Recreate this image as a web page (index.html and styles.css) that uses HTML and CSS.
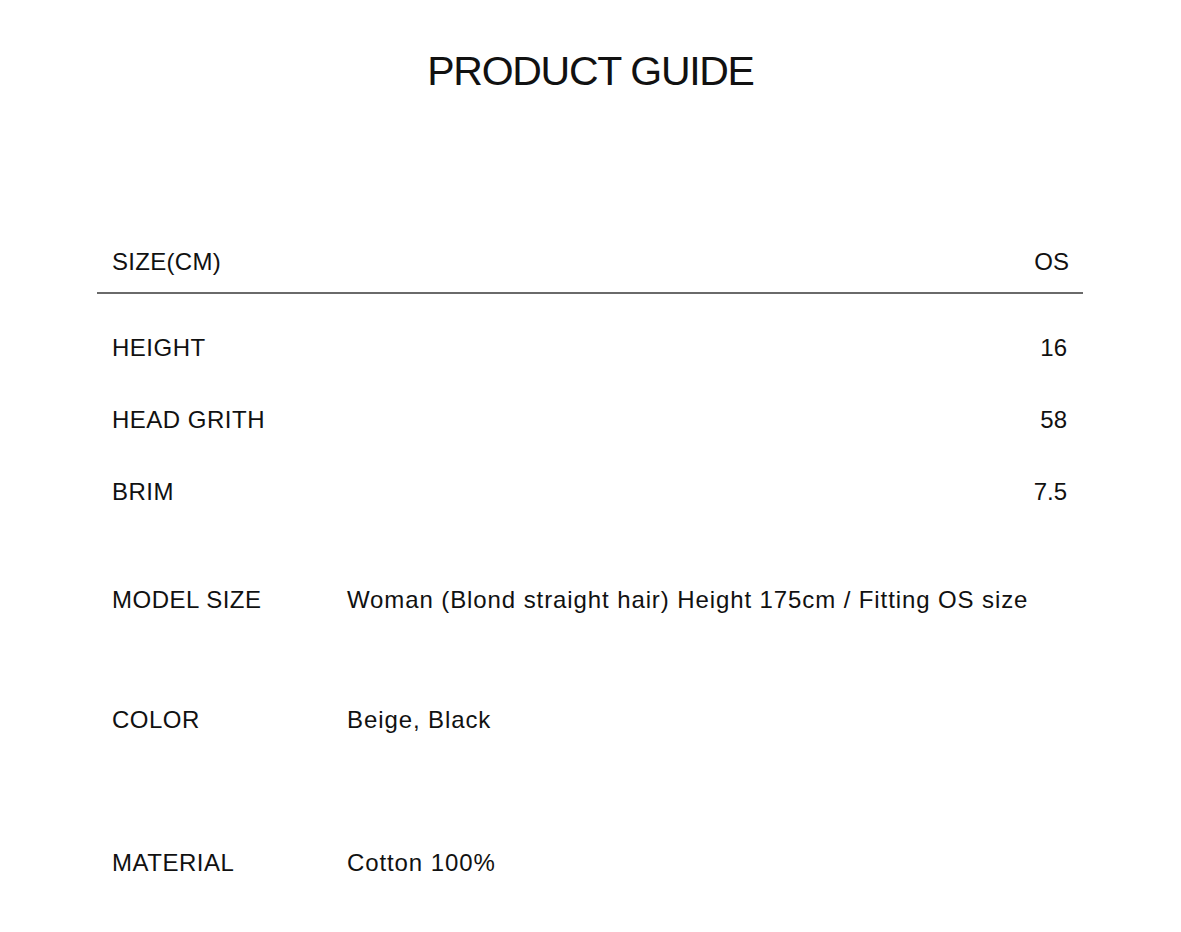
FILE: index.html
```html
<!DOCTYPE html>
<html lang="en">
<head>
<meta charset="utf-8">
<title>Product Guide</title>
<link rel="stylesheet" href="styles.css">
</head>
<body>
<main class="guide">
  <h1 class="title">PRODUCT GUIDE</h1>
  <section class="sizes">
    <div class="size-head">
      <span>SIZE(CM)</span>
      <span class="val">OS</span>
    </div>
    <div class="size-rows">
      <div class="size-row"><span>HEIGHT</span><span class="val">16</span></div>
      <div class="size-row"><span>HEAD GRITH</span><span class="val">58</span></div>
      <div class="size-row"><span>BRIM</span><span class="val">7.5</span></div>
    </div>
  </section>
  <section class="info">
    <div class="info-row model"><span class="label">MODEL SIZE</span><span class="text">Woman (Blond straight hair) Height 175cm / Fitting OS size</span></div>
    <div class="info-row color"><span class="label">COLOR</span><span class="text">Beige, Black</span></div>
    <div class="info-row material"><span class="label">MATERIAL</span><span class="text">Cotton 100%</span></div>
  </section>
</main>
</body>
</html>
```

FILE: styles.css
```css
* { box-sizing: border-box; }
html, body { margin: 0; padding: 0; background: #fff; }
body {
  font-family: "Liberation Sans", Arial, sans-serif;
  color: #111;
  width: 1181px;
  height: 932px;
  overflow: hidden;
}
.guide {
  display: flex;
  flex-direction: column;
}
.title {
  margin: 46px 0 0;
  font-size: 41px;
  line-height: 50px;
  font-weight: 400;
  text-align: center;
  letter-spacing: -1.3px;
}
.sizes {
  margin: 151px 98px 0 97px;
}
.size-head {
  display: flex;
  justify-content: space-between;
  font-size: 24px;
  line-height: 30px;
  letter-spacing: 0.3px;
  padding: 0 14px 15px 15px;
  border-bottom: 2px solid #6a6a6a;
}
.size-rows {
  display: flex;
  flex-direction: column;
  gap: 42px;
  padding: 39px 16px 0 15px;
}
.size-row {
  display: flex;
  justify-content: space-between;
  font-size: 24px;
  line-height: 30px;
  letter-spacing: 0.5px;
}
.val { letter-spacing: 0; }
.info {
  display: flex;
  flex-direction: column;
  padding-left: 112px;
}
.info-row {
  display: flex;
  font-size: 24px;
  line-height: 30px;
}
.info-row .label { width: 235px; flex: none; letter-spacing: 0.5px; }
.info-row .text { letter-spacing: 0.9px; }
.model { margin-top: 78px; }
.color { margin-top: 90px; }
.material { margin-top: 113px; }
```
